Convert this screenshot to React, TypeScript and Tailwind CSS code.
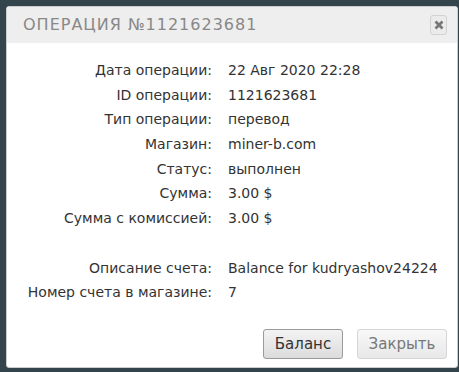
export default function App() {
  const rows: [string, string][] = [
    ['Дата операции:', '22 Авг 2020 22:28'],
    ['ID операции:', '1121623681'],
    ['Тип операции:', 'перевод'],
    ['Магазин:', 'miner-b.com'],
    ['Статус:', 'выполнен'],
    ['Сумма:', '3.00 $'],
    ['Сумма с комиссией:', '3.00 $'],
    ['', ''],
    ['Описание счета:', 'Balance for kudryashov24224'],
    ['Номер счета в магазине:', '7'],
  ];

  return (
    <div className="h-[372px] w-[459px] bg-[#34444c] pl-[6px] pt-[6px] pb-[4px] pr-[1px]">
      <div className="flex h-[362px] flex-col rounded-[3px] border border-[#c9cdd0] bg-white">
        {/* шапка */}
        <div className="flex h-[36px] items-center justify-between bg-[#eeeeee] pl-[16px] pr-[10px]">
          <span
            className="text-[16px] font-medium tracking-[1px] text-[#888888]"
            style={{ fontFamily: '"DejaVu Sans", sans-serif' }}
          >
            ОПЕРАЦИЯ №1121623681
          </span>
          <button className="flex h-[20px] w-[17px] items-center justify-center rounded-[3px] border border-[#d2d2d2] bg-[#ebebeb]">
            <svg width="10" height="10" viewBox="0 0 10 10">
              <path d="M1.5 1.5 L8.5 8.5 M8.5 1.5 L1.5 8.5" stroke="#777777" strokeWidth="2.8" />
            </svg>
          </button>
        </div>

        {/* содержимое */}
        <div
          className="grid grid-cols-[205px_1fr] gap-x-[16px] pt-[15px] text-[14px] text-[#333]"
          style={{ fontFamily: '"DejaVu Sans", sans-serif' }}
        >
          {rows.map(([label, value], i) => (
            <div key={i} className="contents">
              <div className="h-[24.7px] text-right leading-[24.7px]">{label}</div>
              <div className="h-[24.7px] leading-[24.7px]">{value}</div>
            </div>
          ))}
        </div>

        <div
          className="mt-auto flex justify-end gap-[14px] pr-[10px] pb-[8px] text-[15px]"
          style={{ fontFamily: '"DejaVu Sans", sans-serif' }}
        >
          <button className="h-[30px] w-[80px] rounded-[3px] border border-[#9a9a9a] bg-gradient-to-b from-[#f3f3f3] to-[#dcdcdc] text-[#333]">
            Баланс
          </button>
          <button className="h-[30px] w-[90px] rounded-[3px] border border-[#d6d6d6] bg-gradient-to-b from-[#f8f8f8] to-[#e8e8e8] text-[#777]">
            Закрыть
          </button>
        </div>
      </div>
    </div>
  );
}
